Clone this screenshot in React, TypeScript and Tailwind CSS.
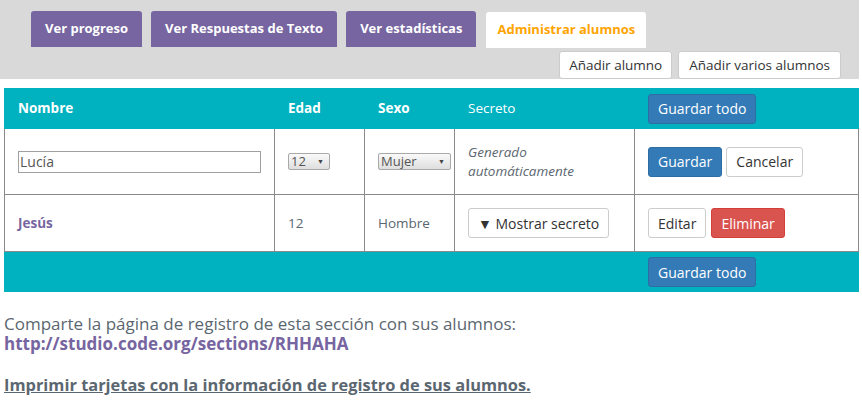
import React from "react";

const purple = "bg-[#7665a0]";

function Tab({ label }: { label: string }) {
  return (
    <div className={`${purple} h-[36px] rounded-t-[3px] px-[14px] flex items-center text-white font-bold text-[13px]`}>
      {label}
    </div>
  );
}

function FakeSelect({ value, w }: { value: string; w: string }) {
  return (
    <div
      className={`${w} h-[17px] border border-[#a9a9a9] rounded-[2px] bg-gradient-to-b from-[#fafafa] to-[#dedede] flex items-center justify-between pl-[2px] pr-[5px] text-[13px] leading-none text-[#555]`}
    >
      <span>{value}</span>
      <span className="text-[7px] text-[#444]">▼</span>
    </div>
  );
}

export default function App() {
  const cell = "border-l border-[#8a8a8a] pl-[13px] flex items-center";
  const hcell = "pl-[14px] flex items-center";
  const btn = "h-[30px] px-[9px] rounded-[3px] border text-[14px]";
  return (
    <div className="w-[862px] h-[404px] overflow-hidden bg-white font-['Open_Sans',sans-serif] text-[#5b6770]">
      {/* top band */}
      <div className="w-[859px] h-[79px] bg-[#d9d9d9] pt-[11px]">
        <div className="flex items-start gap-[9px] pl-[31px]">
          <Tab label="Ver progreso" />
          <Tab label="Ver Respuestas de Texto" />
          <Tab label="Ver estadísticas" />
          <div className="mt-px h-[36px] ml-px rounded-t-[3px] bg-white px-[11px] flex items-center text-[#ffa400] font-bold text-[13px]">
            Administrar alumnos
          </div>
        </div>
        <div className="flex justify-end gap-[6px] pr-[18px] mt-[3px]">
          <button className="h-[28px] px-[9px] bg-white border border-[#ccc] rounded-[3px] text-[13.5px] text-[#333]">
            Añadir alumno
          </button>
          <button className="h-[28px] px-[10px] bg-white border border-[#ccc] rounded-[3px] text-[13.5px] text-[#333]">
            Añadir varios alumnos
          </button>
        </div>
      </div>

      {/* table */}
      <div className="mt-[9px] ml-[4px] w-[855px] text-[13.5px]">
        <div className="grid grid-cols-[270px_90px_90px_180px_225px] h-[41px] bg-[#00b2c0] text-white">
          <div className={`${hcell} font-bold`}>Nombre</div>
          <div className={`${hcell} font-bold`}>Edad</div>
          <div className={`${hcell} font-bold`}>Sexo</div>
          <div className={hcell}>Secreto</div>
          <div className={hcell}>
            <button className={`${btn} h-[29px] bg-[#337ab7] border-[#2e6da4] text-white`}>Guardar todo</button>
          </div>
        </div>

        <div className="grid grid-cols-[270px_90px_90px_180px_225px] h-[66px] border-b border-r border-[#8a8a8a]">
          <div className={cell}>
            <div className="w-[243px] h-[22px] border border-[#a0a0a0] flex items-center pl-[1px] text-[14px] text-[#555]">
              Lucía
            </div>
          </div>
          <div className={cell}>
            <FakeSelect value="12" w="w-[42px]" />
          </div>
          <div className={cell}>
            <FakeSelect value="Mujer" w="w-[73px]" />
          </div>
          <div className={`${cell} italic leading-[19px]`}>
            <div>
              Generado
              <br />
              automáticamente
            </div>
          </div>
          <div className={`${cell} gap-[4px]`}>
            <button className={`${btn} bg-[#337ab7] border-[#2e6da4] text-white`}>Guardar</button>
            <button className={`${btn} bg-white border-[#ccc] text-[#333]`}>Cancelar</button>
          </div>
        </div>

        <div className="grid grid-cols-[270px_90px_90px_180px_225px] h-[57px] border-b border-r border-[#8a8a8a]">
          <div className={`${cell} font-bold text-[#7665a0]`}>Jesús</div>
          <div className={cell}>12</div>
          <div className={cell}>Hombre</div>
          <div className={cell}>
            <button className={`${btn} px-[8px] bg-white border-[#ccc] text-[#333]`}>▼ Mostrar secreto</button>
          </div>
          <div className={`${cell} gap-[5px]`}>
            <button className={`${btn} bg-white border-[#ccc] text-[#333]`}>Editar</button>
            <button className={`${btn} bg-[#d9534f] border-[#d43f3a] text-white`}>Eliminar</button>
          </div>
        </div>

        <div className="grid grid-cols-[270px_90px_90px_180px_225px] h-[40px] bg-[#00b2c0]">
          <div />
          <div />
          <div />
          <div />
          <div className={hcell}>
            <button className={`${btn} h-[29px] bg-[#337ab7] border-[#2e6da4] text-white`}>Guardar todo</button>
          </div>
        </div>
      </div>

      {/* share text */}
      <div className="mt-[22px] ml-[4px] text-[17px] leading-[20px]">
        <p>Comparte la página de registro de esta sección con sus alumnos:</p>
        <a className="block font-bold text-[#7665a0]">http://studio.code.org/sections/RHHAHA</a>
        <p className="mt-[21px] text-[16.4px]">
          <a className="font-bold underline">Imprimir tarjetas con la información de registro de sus alumnos.</a>
        </p>
      </div>
    </div>
  );
}
